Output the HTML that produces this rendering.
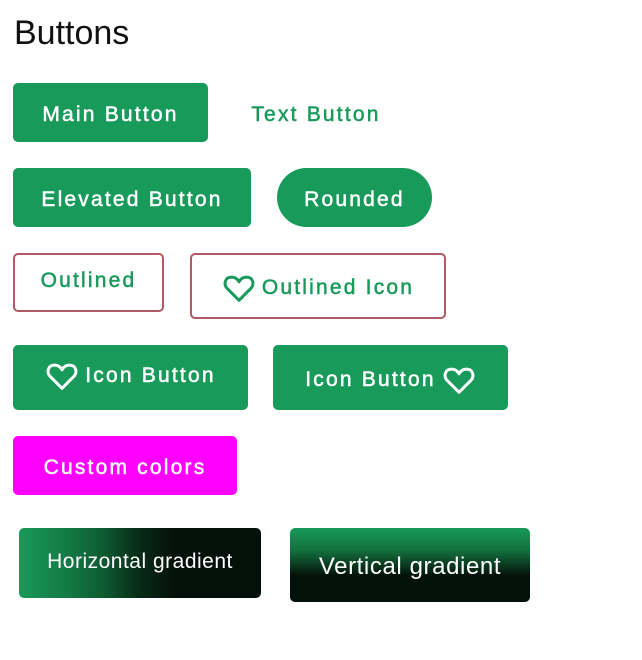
<!DOCTYPE html><html><head><style>
body{margin:0;width:642px;height:660px;background:#fff;position:relative;font-family:"Liberation Sans",sans-serif;overflow:hidden}
.a{position:absolute;box-sizing:border-box;display:flex;align-items:center;justify-content:center;font-size:21px;letter-spacing:2.2px;font-weight:normal;-webkit-text-stroke:0.5px currentColor;border-radius:5px;padding-top:4px}
.g{background:#189a5a;color:#fff}
.o{border:2px solid #b15a66;color:#189a5a;background:#fff}
svg{display:block}
</style></head><body>
<div style="position:absolute;left:14px;top:14px;font-size:34px;color:#111">Buttons</div>
<div class="a g" style="left:13px;top:83px;width:195px;height:59px">Main Button</div>
<div class="a" style="left:236px;top:83px;width:160px;height:59px;color:#189a5a">Text Button</div>
<div class="a g" style="left:13px;top:168px;width:238px;height:59px">Elevated Button</div>
<div class="a g" style="left:277px;top:168px;width:155px;height:59px;border-radius:30px">Rounded</div>
<div class="a o" style="left:13px;top:253px;width:151px;height:59px;padding-bottom:4px;padding-top:0">Outlined</div>
<div class="a o" style="left:190px;top:253px;width:256px;height:66px">
<svg width="34" height="30" viewBox="0 0 24 22" style="margin-right:6px"><path d="M12 20 L3.5 11.5 C0.5 8.5 1.5 3 6.5 3 C9 3 11 4.5 12 6.5 C13 4.5 15 3 17.5 3 C22.5 3 23.5 8.5 20.5 11.5 Z" fill="none" stroke="#189a5a" stroke-width="2.2" stroke-linejoin="round"/></svg>Outlined Icon</div>
<div class="a g" style="left:13px;top:345px;width:235px;height:65px;padding-bottom:4px;padding-top:0">
<svg width="34" height="30" viewBox="0 0 24 22" style="margin-right:6px"><path d="M12 20 L3.5 11.5 C0.5 8.5 1.5 3 6.5 3 C9 3 11 4.5 12 6.5 C13 4.5 15 3 17.5 3 C22.5 3 23.5 8.5 20.5 11.5 Z" fill="none" stroke="#fff" stroke-width="2.2" stroke-linejoin="round"/></svg>Icon Button</div>
<div class="a g" style="left:273px;top:345px;width:235px;height:65px">Icon Button
<svg width="34" height="30" viewBox="0 0 24 22" style="margin-left:6px"><path d="M12 20 L3.5 11.5 C0.5 8.5 1.5 3 6.5 3 C9 3 11 4.5 12 6.5 C13 4.5 15 3 17.5 3 C22.5 3 23.5 8.5 20.5 11.5 Z" fill="none" stroke="#fff" stroke-width="2.2" stroke-linejoin="round"/></svg></div>
<div class="a" style="left:13px;top:436px;width:224px;height:59px;background:#ff00ff;color:#fff">Custom colors</div>
<div class="a" style="left:19px;top:528px;width:242px;height:70px;letter-spacing:0.5px;-webkit-text-stroke:0;font-size:21px;color:#fff;background:linear-gradient(to right,#189a5a 0%,#147a45 20%,#0f5a32 35%,#082a16 50%,#04100a 65%,#04100a 100%);padding-top:0;padding-bottom:2px">Horizontal gradient</div>
<div class="a" style="left:290px;top:528px;width:240px;height:74px;letter-spacing:0.6px;-webkit-text-stroke:0;font-size:24px;color:#fff;background:linear-gradient(to bottom,#189a5a 0%,#14703f 30%,#0a3a20 50%,#04100a 65%,#04100a 100%)">Vertical gradient</div>
</body></html>
